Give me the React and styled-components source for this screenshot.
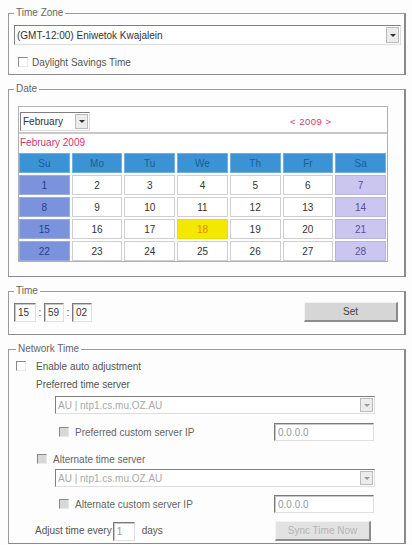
import React from "react";
import styled, { createGlobalStyle } from "styled-components";

const GlobalStyle = createGlobalStyle`
  html, body {
    margin: 0;
    padding: 0;
    background: #fdfdfd;
  }
  body {
    font-family: "Liberation Sans", Arial, sans-serif;
    font-size: 10px;
    color: #333;
  }
`;

const Page = styled.div`
  width: 412px;
  box-sizing: border-box;
  padding: 7px 6px 0 8px;
  display: flex;
  flex-direction: column;
  gap: 8px;
`;

const Group = styled.fieldset`
  margin: 0;
  padding: ${(p) => p.$pad || "4px 3px 6px 5px"};
  border: 1px solid #9a9a9a;
  border-right: 2px solid #8a8a8a;
  border-bottom: 1px solid #8a8a8a;
  box-shadow: inset 1px 1px 0 #fff;
  min-width: 0;
`;

const Legend = styled.legend`
  padding: 0 2px;
  margin-left: 0;
  font-size: 10px;
  line-height: 12px;
  color: #666;
`;

const Select = styled.div`
  display: flex;
  align-items: center;
  box-sizing: border-box;
  width: ${(p) => p.$w || "100%"};
  height: ${(p) => p.$h || 20}px;
  margin-left: ${(p) => p.$ml || 0}px;
  margin-top: ${(p) => p.$mt || 0}px;
  border: 1px solid #7f7f7f;
  border-right-color: #ddd;
  border-bottom-color: #ddd;
  background: #fff;
  color: ${(p) => (p.$disabled ? "#a8a8a8" : "#333")};
  padding-left: 2px;
  font-size: 10px;
`;

const SelectText = styled.span`
  flex: 1;
  white-space: nowrap;
`;

const Arrow = styled.span`
  width: 13px;
  height: calc(100% - 2px);
  margin-right: 1px;
  box-sizing: border-box;
  border: 1px solid #bbb;
  background: #ececec;
  display: flex;
  align-items: center;
  justify-content: center;
  &::after {
    content: "";
    border-left: 3px solid transparent;
    border-right: 3px solid transparent;
    border-top: 3px solid ${(p) => (p.$disabled ? "#999" : "#333")};
  }
`;

const CheckRow = styled.label`
  display: flex;
  align-items: center;
  height: 14px;
  margin-top: ${(p) => p.$mt || 0}px;
  padding-left: ${(p) => p.$pl || 0}px;
  color: ${(p) => (p.$disabled ? "#666" : "#555")};
  white-space: nowrap;
`;

const Box = styled.span`
  width: 10px;
  height: 10px;
  box-sizing: border-box;
  margin-right: ${(p) => p.$gap || 9}px;
  border: 1px solid #888;
  border-right-color: #e8e8e8;
  border-bottom-color: #e8e8e8;
  background: ${(p) => (p.$disabled ? "#d8d8d8" : "#fff")};
  flex: none;
`;

const Text = styled.div`
  height: 14px;
  line-height: 14px;
  margin-top: ${(p) => p.$mt || 0}px;
  padding-left: ${(p) => p.$pl || 0}px;
  color: #555;
  white-space: nowrap;
`;

/* calendar */

const Calendar = styled.div`
  width: 368px;
  margin-left: 4px;
  border: 1px solid #b0b0b0;
  background: #fff;
`;

const CalTop = styled.div`
  display: flex;
  align-items: center;
  height: 22px;
  padding: 3px 2px 0 1px;
  border-bottom: 2px solid #c8c8c8;
`;

const YearNav = styled.span`
  margin-left: 200px;
  color: #d23a6e;
  font-size: 9.5px;
  letter-spacing: 0.5px;
`;

const MonthTitle = styled.div`
  height: 19px;
  line-height: 18px;
  padding-left: 1px;
  color: #c9386c;
`;

const Table = styled.table`
  border-collapse: separate;
  border-spacing: 2px 2px;
  margin: -2px 0 -2px -2px;
  width: calc(100% + 3px);
  table-layout: fixed;
`;

const Th = styled.th`
  height: 18px;
  padding: 0;
  background: #3b93d6;
  color: #1b5f8e;
  font-weight: normal;
  font-size: 10px;
  border: 1px solid #6eb0e0;
`;

const cellBg = { su: "#7b93dc", sa: "#cac6ef", today: "#f3e900", day: "#fff" };
const cellFg = { su: "#2c3c8e", sa: "#5c4e9a", today: "#e08b00", day: "#333" };
const cellBd = { su: "#9aaae0", sa: "#b9b4dc", today: "#e8de00", day: "#cfcfcf" };

const Td = styled.td`
  height: 18px;
  padding: 0;
  text-align: center;
  font-size: 10px;
  background: ${(p) => cellBg[p.$kind]};
  color: ${(p) => cellFg[p.$kind]};
  border: 1px solid ${(p) => cellBd[p.$kind]};
`;

/* time */

const TimeRow = styled.div`
  display: flex;
  align-items: center;
  height: 20px;
`;

const Field = styled.div`
  box-sizing: border-box;
  width: ${(p) => p.$w || 20}px;
  height: ${(p) => p.$h || 19}px;
  margin-left: ${(p) => (p.$push ? "auto" : `${p.$ml || 0}px`)};
  border: 1px solid #7a7a7a;
  border-right-color: #e0e0e0;
  border-bottom-color: #e0e0e0;
  box-shadow: inset 1px 1px 0 #c8c8c8;
  background: #fff;
  color: ${(p) => (p.$dim ? "#999" : "#333")};
  padding-left: 3px;
  line-height: 17px;
  font-size: 10px;
  flex: none;
`;

const Colon = styled.span`
  width: 8px;
  text-align: center;
  color: #444;
`;

const Button = styled.div`
  box-sizing: border-box;
  width: ${(p) => p.$w}px;
  height: 20px;
  margin-left: auto;
  margin-right: ${(p) => p.$mr || 0}px;
  display: flex;
  align-items: center;
  justify-content: center;
  background: ${(p) => (p.$disabled ? "#e2e2e2" : "#d6d6d6")};
  border: 1px solid #f4f4f4;
  border-right: 2px solid #8c8c8c;
  border-bottom: 2px solid #8c8c8c;
  color: ${(p) => (p.$disabled ? "#b4b4b4" : "#444")};
  font-size: 10px;
  white-space: nowrap;
`;

const LineRow = styled.div`
  display: flex;
  align-items: center;
  height: ${(p) => p.$h || 18}px;
  margin-top: ${(p) => p.$mt || 0}px;
  padding-right: ${(p) => p.$pr || 0}px;
`;

const days = ["Su", "Mo", "Tu", "We", "Th", "Fr", "Sa"];
const weeks = [
  [1, 2, 3, 4, 5, 6, 7],
  [8, 9, 10, 11, 12, 13, 14],
  [15, 16, 17, 18, 19, 20, 21],
  [22, 23, 24, 25, 26, 27, 28],
];

const kindOf = (d, i) => {
  if (d === 18) return "today";
  if (i === 0) return "su";
  if (i === 6) return "sa";
  return "day";
};

const App = () => {
  return (
    <>
      <GlobalStyle />
      <Page>
        <Group $pad="6px 3px 5px 5px">
          <Legend>Time Zone</Legend>
          <Select>
            <SelectText>(GMT-12:00) Eniwetok Kwajalein</SelectText>
            <Arrow />
          </Select>
          <CheckRow $mt={10} $pl={4}>
            <Box $gap={4} />
            Daylight Savings Time
          </CheckRow>
        </Group>

        <Group $pad="11px 3px 14px 5px">
          <Legend>Date</Legend>
          <Calendar>
            <CalTop>
              <Select $w="70px" $h={19}>
                <SelectText>February</SelectText>
                <Arrow />
              </Select>
              <YearNav>&lt; 2009 &gt;</YearNav>
            </CalTop>
            <MonthTitle>February 2009</MonthTitle>
            <Table>
              <thead>
                <tr>
                  {days.map((d) => (
                    <Th key={d}>{d}</Th>
                  ))}
                </tr>
              </thead>
              <tbody>
                {weeks.map((w) => (
                  <tr key={w[0]}>
                    {w.map((d, i) => (
                      <Td key={d} $kind={kindOf(d, i)}>
                        {d}
                      </Td>
                    ))}
                  </tr>
                ))}
              </tbody>
            </Table>
          </Calendar>
        </Group>

        <Group $pad="5px 6px 12px 5px">
          <Legend>Time</Legend>
          <TimeRow>
            <Field $w={22}>15</Field>
            <Colon>:</Colon>
            <Field $w={20}>59</Field>
            <Colon>:</Colon>
            <Field $w={20}>02</Field>
            <Button $w={94}>Set</Button>
          </TimeRow>
        </Group>

        <Group $pad="4px 3px 2px 7px">
          <Legend>Network Time</Legend>
          <CheckRow>
            <Box $gap={10} />
            Enable auto adjustment
          </CheckRow>
          <Text $mt={5} $pl={20}>
            Preferred time server
          </Text>
          <Select $w="320px" $h={18} $ml={39} $mt={4} $disabled>
            <SelectText>AU | ntp1.cs.mu.OZ.AU</SelectText>
            <Arrow $disabled />
          </Select>
          <LineRow $mt={9} $pr={27}>
            <CheckRow $pl={43} $disabled>
              <Box $disabled $gap={6} />
              Preferred custom server IP
            </CheckRow>
            <Field $w={100} $h={18} $push $dim>
              0.0.0.0
            </Field>
          </LineRow>
          <CheckRow $mt={11} $pl={21} $disabled>
            <Box $disabled $gap={6} />
            Alternate time server
          </CheckRow>
          <Select $w="320px" $h={18} $ml={39} $mt={3} $disabled>
            <SelectText>AU | ntp1.cs.mu.OZ.AU</SelectText>
            <Arrow $disabled />
          </Select>
          <LineRow $mt={8} $pr={27}>
            <CheckRow $pl={43} $disabled>
              <Box $disabled $gap={6} />
              Alternate custom server IP
            </CheckRow>
            <Field $w={100} $h={18} $push $dim>
              0.0.0.0
            </Field>
          </LineRow>
          <LineRow $mt={8} $h={20}>
            <Text $pl={19}>Adjust time every</Text>
            <Field $w={22} $h={19} $ml={1} $dim>
              1
            </Field>
            <Text $pl={7}>days</Text>
            <Button $w={96} $mr={30} $disabled>
              Sync Time Now
            </Button>
          </LineRow>
        </Group>
      </Page>
    </>
  );
};

export default App;
